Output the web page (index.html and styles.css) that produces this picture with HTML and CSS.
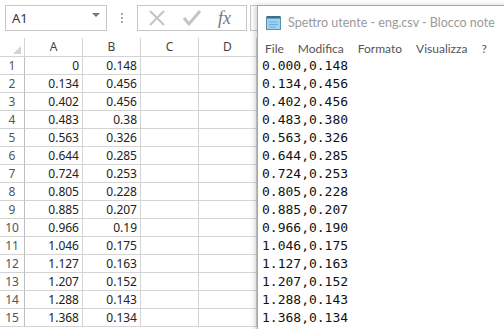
FILE: index.html
```html
<!DOCTYPE html>
<html lang="it">
<head>
  <meta charset="UTF-8" />
  <title>Spettro utente</title>
  <link rel="stylesheet" href="styles.css">
</head>
<body>

<div class="excel">
  <div class="formula-bar">
    <div class="name-box">
      <span>A1</span>
      <span class="drop"></span>
    </div>
    <div class="grip"><i></i><i></i><i></i></div>
    <div class="fx-box">
      <svg class="ico" width="18" height="18" viewBox="0 0 18 18"><path d="M2 2 L16 16 M16 2 L2 16" stroke="#c4c4c4" stroke-width="2" fill="none"/></svg>
      <svg class="ico" width="20" height="18" viewBox="0 0 20 18"><path d="M2 9 L7 15 L18 2" stroke="#c4c4c4" stroke-width="3" fill="none"/></svg>
      <span class="fx">fx</span>
    </div>
    <div class="fx-input"></div>
  </div>

  <div class="sheet" id="sheet">
    <div class="hd corner"><span class="tri"></span></div>
    <div class="hd">A</div>
    <div class="hd">B</div>
    <div class="hd">C</div>
    <div class="hd">D</div>
  </div>
</div>

<div class="notepad">
  <div class="np-title">
    <svg width="17" height="15" viewBox="0 0 17 15">
      <rect x="1.5" y="2.5" width="14" height="12" fill="#9fd3ef" stroke="#5a8fb0"/>
      <rect x="1.5" y="1" width="14" height="2.5" fill="#3d6e8e"/>
      <path d="M4 7h9M4 9.5h9M4 12h7" stroke="#6fb0d8"/>
    </svg>
    <span>Spettro utente - eng.csv - Blocco note</span>
  </div>
  <div class="np-menu">
    <span>File</span>
    <span>Modifica</span>
    <span>Formato</span>
    <span>Visualizza</span>
    <span>?</span>
  </div>
  <pre class="np-text" id="csv"></pre>
</div>

<script src="app.js"></script>
</body>
</html>
```

FILE: app.js
```js
const rows = [
  ["0", "0.148", "0.000,0.148"],
  ["0.134", "0.456", "0.134,0.456"],
  ["0.402", "0.456", "0.402,0.456"],
  ["0.483", "0.38", "0.483,0.380"],
  ["0.563", "0.326", "0.563,0.326"],
  ["0.644", "0.285", "0.644,0.285"],
  ["0.724", "0.253", "0.724,0.253"],
  ["0.805", "0.228", "0.805,0.228"],
  ["0.885", "0.207", "0.885,0.207"],
  ["0.966", "0.19", "0.966,0.190"],
  ["1.046", "0.175", "1.046,0.175"],
  ["1.127", "0.163", "1.127,0.163"],
  ["1.207", "0.152", "1.207,0.152"],
  ["1.288", "0.143", "1.288,0.143"],
  ["1.368", "0.134", "1.368,0.134"]
];

const sheet = document.getElementById("sheet");
let html = "";
rows.forEach((r, i) => {
  html += `<div class="rh">${i + 1}</div>
    <div class="cell num">${r[0]}</div>
    <div class="cell num">${r[1]}</div>
    <div class="cell"></div>
    <div class="cell"></div>`;
});
sheet.insertAdjacentHTML("beforeend", html);

document.getElementById("csv").textContent = rows.map(r => r[2]).join("\n");
```

FILE: styles.css
```css
* { box-sizing: border-box; }
body {
  margin: 0;
  width: 504px;
  height: 329px;
  overflow: hidden;
  position: relative;
  background: #fff;
  font-family: "Noto Sans", "Open Sans", sans-serif;
}

/* excel part */
.formula-bar {
  height: 38px;
  display: flex;
  align-items: flex-start;
  padding-top: 5px;
}

.name-box {
  margin-left: 5px;
  width: 102px;
  height: 26px;
  border: 1px solid #c6c6c6;
  display: flex;
  align-items: center;
  justify-content: space-between;
  padding: 0 6px 0 6px;
  font-size: 13px;
  color: #333;
}

.drop {
  width: 0;
  height: 0;
  border-left: 4px solid transparent;
  border-right: 4px solid transparent;
  border-top: 4px solid #777;
  margin-top: -6px;
}

.grip {
  width: 30px;
  height: 26px;
  display: flex;
  flex-direction: column;
  align-items: center;
  justify-content: center;
  gap: 2px;
}
.grip i {
  width: 2px;
  height: 2px;
  background: #aaa;
}

.fx-box {
  width: 110px;
  height: 26px;
  border: 1px solid #c6c6c6;
  display: flex;
  align-items: center;
  padding-left: 10px;
}
.fx-box .ico { margin-right: 16px; }
.fx {
  font-family: "Liberation Serif", serif;
  font-style: italic;
  font-size: 18px;
  color: #777;
}

.fx-input {
  margin-left: 3px;
  flex: 1;
  height: 26px;
  border: 1px solid #c6c6c6;
}

.sheet {
  display: grid;
  grid-template-columns: 25px 58px 58px 58px 58px;
  grid-template-rows: 19px;
  grid-auto-rows: 18px;
}

.hd, .rh, .cell {
  border-right: 1px solid #d4d4d4;
  border-bottom: 1px solid #d4d4d4;
  font-size: 12px;
  line-height: 17px;
}

.hd {
  text-align: center;
  color: #444;
  line-height: 18px;
}
.corner { position: relative; }
.tri {
  position: absolute;
  right: 3px;
  bottom: 2px;
  width: 0;
  height: 0;
  border-left: 8px solid transparent;
  border-bottom: 8px solid #d2d2d2;
}

.rh {
  text-align: center;
  color: #555;
  border-right-color: #c0c0c0;
}

.cell { color: #222; }
.num {
  text-align: right;
  padding-right: 3px;
}

/* notepad window */
.notepad {
  position: absolute;
  left: 257px;
  top: 5px;
  right: -10px;
  bottom: -10px;
  background: #fff;
  border: 1px solid #a8a8a8;
  box-shadow: -2px 0 5px rgba(0,0,0,0.18);
}

.np-title {
  height: 33px;
  display: flex;
  align-items: center;
  padding-left: 7px;
  gap: 6px;
  font-family: Lato, "Noto Sans", sans-serif;
  font-size: 12.5px;
  color: #9a9a9a;
  white-space: nowrap;
}

.np-menu {
  height: 18px;
  display: flex;
  align-items: center;
  gap: 14px;
  padding-left: 7px;
  font-family: Lato, "Noto Sans", sans-serif;
  font-size: 12px;
  color: #555;
  white-space: nowrap;
}

.np-text {
  margin: 0;
  padding: 0 4px;
  font-family: "DejaVu Sans Mono", "Liberation Mono", monospace;
  font-size: 13px;
  line-height: 18px;
  color: #111;
}
```
